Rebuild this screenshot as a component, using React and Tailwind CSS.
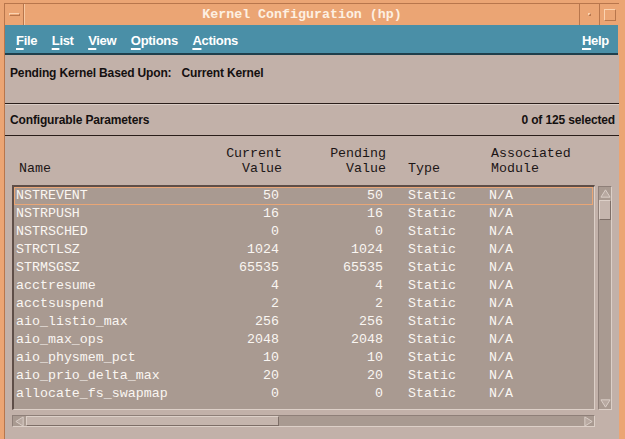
import React from "react";

const rows = [
  ["NSTREVENT", "50", "50"],
  ["NSTRPUSH", "16", "16"],
  ["NSTRSCHED", "0", "0"],
  ["STRCTLSZ", "1024", "1024"],
  ["STRMSGSZ", "65535", "65535"],
  ["acctresume", "4", "4"],
  ["acctsuspend", "2", "2"],
  ["aio_listio_max", "256", "256"],
  ["aio_max_ops", "2048", "2048"],
  ["aio_physmem_pct", "10", "10"],
  ["aio_prio_delta_max", "20", "20"],
  ["allocate_fs_swapmap", "0", "0"],
];

const menus = ["File", "List", "View", "Options", "Actions"];

const cols = "grid grid-cols-[186px_80px_104px_103px_1fr]";

const Mnemonic = ({ label }) => (
  <span>
    <span className="underline decoration-[1.5px] underline-offset-[3px]">{label[0]}</span>
    {label.slice(1)}
  </span>
);

// etched triangle used on the motif scrollbar arrows
const Arrow = ({ dir }) => {
  const pts = {
    up: "6,2 11,10 1,10",
    down: "1,2 11,2 6,10",
    left: "2,6 10,1 10,11",
    right: "2,1 10,6 2,11",
  }[dir];
  return (
    <svg viewBox="0 0 12 12" className="h-[11px] w-[11px]">
      <polygon points={pts} fill="#b8a9a1" stroke="#ddd1ca" strokeWidth="1" />
    </svg>
  );
};

export default function App() {
  return (
    <div
      className="flex h-[439px] w-[625px] flex-col overflow-hidden bg-[#eba574] pl-[4px] pr-[6px] pt-[3px]"
      style={{ fontFamily: '"Liberation Sans", Arial, sans-serif' }}
    >
      <div className="flex flex-1 flex-col border-l border-t border-[#b8764c]">
        {/* title bar */}
        <div className="flex h-[21px] items-stretch text-[#fdf0e2]">
          <div className="flex w-[19px] items-center justify-center border-r border-[#b8764c]">
            <div className="h-[3px] w-[11px] border-b border-r border-[#b8764c] border-t border-l border-t-[#fbd3b0] border-l-[#fbd3b0]" />
          </div>
          <div className="flex flex-1 items-center justify-center border-l border-[#f8c9a2] font-['Liberation_Mono',monospace] text-[13.3px] font-bold">
            Kernel Configuration (hp)
          </div>
          <div className="flex w-[20px] items-center justify-center border-l border-[#b8764c]">
            <div className="h-[3px] w-[3px] border border-[#b8764c] border-t-[#fbd3b0] border-l-[#fbd3b0]" />
          </div>
          <div className="flex w-[20px] items-center justify-center border-l border-[#b8764c]">
            <div className="h-[12px] w-[12px] border border-[#b8764c] border-t-[#fbd3b0] border-l-[#fbd3b0]" />
          </div>
        </div>

        {/* menu bar */}
        <div className="mr-[1px] flex h-[30px] items-center border-b-2 border-[#1f3f4c] bg-[#4a8fa7] pl-[11px] pr-[9px] pt-[3px] text-[13px] font-bold tracking-[-0.3px] text-white">
          <div className="flex gap-[14.5px]">
            {menus.map((m) => (
              <Mnemonic key={m} label={m} />
            ))}
          </div>
          <div className="ml-auto">
            <Mnemonic label="Help" />
          </div>
        </div>

        {/* body */}
        <div className="flex flex-1 flex-col bg-[#c2b1a9] text-[#141010]">
          <div className="h-[49px] border-b border-[#2a1e1a] pl-[5px] pt-[11px] text-[12px] font-bold leading-[14px] tracking-[-0.15px]">
            Pending Kernel Based Upon:<span className="ml-[10px]">Current Kernel</span>
          </div>
          <div className="flex h-[32px] border-b border-t border-b-[#2a1e1a] border-t-[#d9ccc5] pl-[5px] pr-[4px] pt-[8px] text-[12px] font-bold leading-[14px] tracking-[-0.15px]">
            <span>Configurable Parameters</span>
            <span className="ml-auto">0 of 125 selected</span>
          </div>

          {/* column headers */}
          <div className={`${cols} pl-[11px] pt-[10px] font-['Liberation_Mono',monospace] text-[13.3px] leading-[15px] text-[#1c1616]`}>
            <div className="flex items-end pl-[3px]">Name</div>
            <div className="text-right">
              Current
              <br />
              Value
            </div>
            <div className="text-right">
              Pending
              <br />
              Value
            </div>
            <div className="flex items-end pl-[22px]">Type</div>
            <div className="pl-[2px]">
              Associated
              <br />
              Module
            </div>
          </div>

          {/* list + vertical scrollbar */}
          <div className="mt-[9px] flex gap-[3px] pl-[7px]">
            <div className="h-[225px] w-[583px] overflow-hidden border-l-2 border-t-2 border-b border-r border-l-[#5e4e48] border-t-[#5e4e48] border-b-[#ddd0c8] border-r-[#ddd0c8] bg-[#a99a91] font-['Liberation_Mono',monospace] text-[13.3px] text-[#faf6f2]">
              {rows.map((r, i) => (
                <div
                  key={r[0]}
                  className={`${cols} mr-[1px] h-[18px] items-center border pl-[1px] leading-[16px] ${
                    i === 0 ? "border-[#e9a676]" : "border-transparent"
                  }`}
                >
                  <div>{r[0]}</div>
                  <div className="pr-[3px] text-right">{r[1]}</div>
                  <div className="pr-[3px] text-right">{r[2]}</div>
                  <div className="pl-[22px]">Static</div>
                  <div>N/A</div>
                </div>
              ))}
            </div>
            <div className="mt-[1px] flex h-[224px] w-[14px] flex-col border border-[#8e7f78] border-b-[#ddd0c8] border-r-[#ddd0c8] bg-[#a99a91]">
              <div className="flex h-[13px] items-center justify-center">
                <Arrow dir="up" />
              </div>
              <div className="h-[20px] border border-[#ddd0c8] border-b-[#7d6e67] border-r-[#7d6e67] bg-[#c5b5ad]" />
              <div className="flex-1" />
              <div className="flex h-[12px] items-center justify-center">
                <Arrow dir="down" />
              </div>
            </div>
          </div>

          {/* horizontal scrollbar */}
          <div className="ml-[7px] mt-[5px] flex h-[12px] w-[583px] border border-[#8e7f78] border-b-[#ddd0c8] border-r-[#ddd0c8] bg-[#a99a91]">
            <div className="flex w-[13px] items-center justify-center">
              <Arrow dir="left" />
            </div>
            <div className="w-[253px] border border-[#ddd0c8] border-b-[#7d6e67] border-r-[#7d6e67] bg-[#c5b5ad]" />
            <div className="flex-1" />
            <div className="flex w-[12px] items-center justify-center">
              <Arrow dir="right" />
            </div>
          </div>
        </div>
      </div>
    </div>
  );
}
